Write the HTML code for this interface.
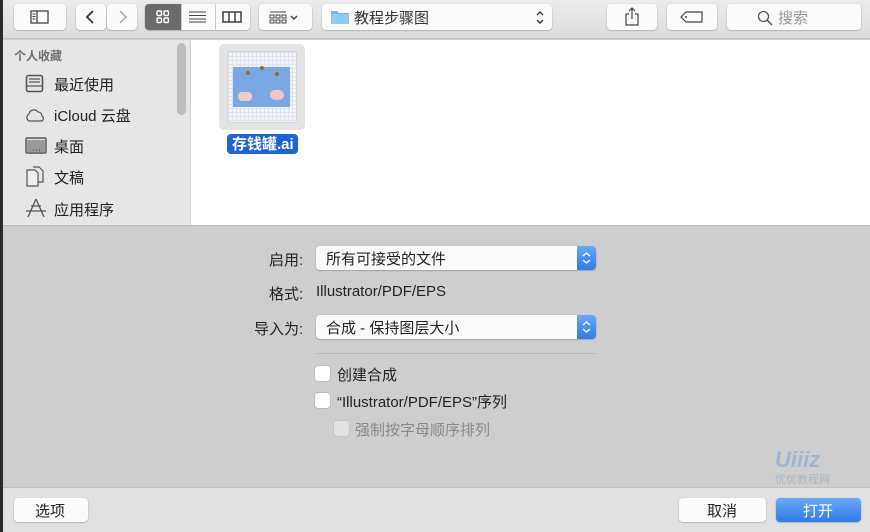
<!DOCTYPE html>
<html><head><meta charset="utf-8"><style>
*{margin:0;padding:0;box-sizing:border-box}
body{width:870px;height:532px;overflow:hidden;position:relative;background:#cecece;font-family:"Liberation Sans","Noto Sans CJK SC",sans-serif;color:#222}
.a{position:absolute}
.btn{position:absolute;background:#fbfbfb;border-radius:4px;box-shadow:0 0.5px 1.5px rgba(0,0,0,.35);}
.t{position:absolute;white-space:nowrap}
.cb{position:absolute;width:15px;height:15px;background:#fff;border-radius:3px;box-shadow:0 0 1px rgba(0,0,0,.5)}
</style></head><body>
<div class="a" style="left:0;top:0;width:870px;height:39px;background:linear-gradient(#ececec,#dcdcdc);border-bottom:1px solid #c4c4c4"></div>
<div class="a" style="left:0;top:0;width:3px;height:532px;background:#2a2a2a;z-index:5"></div>
<div class="btn" style="left:14px;top:4px;width:52px;height:26px"><svg class="a" style="left:16px;top:6px" width="20" height="14"><rect x="1" y="1" width="17" height="12" fill="none" stroke="#444" stroke-width="1.3"/><line x1="7" y1="1" x2="7" y2="13" stroke="#444" stroke-width="1.3"/><path d="M2.5 4h3M2.5 6.5h3M2.5 9h3" stroke="#444"/></svg></div>
<div class="btn" style="left:76px;top:4px;width:30px;height:26px"><svg class="a" style="left:9px;top:6px" width="12" height="14"><path d="M8 1L2 7l6 6" fill="none" stroke="#333" stroke-width="1.8"/></svg></div>
<div class="btn" style="left:107px;top:4px;width:30px;height:26px"><svg class="a" style="left:10px;top:6px" width="12" height="14"><path d="M3 1l6 6-6 6" fill="none" stroke="#aaa" stroke-width="1.5"/></svg></div>
<div class="btn" style="left:145px;top:4px;width:105px;height:26px;overflow:hidden">
<div class="a" style="left:0;top:0;width:36px;height:26px;background:#6b6b6b"></div>
<svg class="a" style="left:11px;top:6px" width="14" height="14"><g fill="none" stroke="#fff" stroke-width="1.4"><rect x="1" y="1" width="4.5" height="4.5" rx="1.2"/><rect x="8" y="1" width="4.5" height="4.5" rx="1.2"/><rect x="1" y="8" width="4.5" height="4.5" rx="1.2"/><rect x="8" y="8" width="4.5" height="4.5" rx="1.2"/></g></svg>
<div class="a" style="left:36px;top:0;width:1px;height:26px;background:#ccc"></div>
<svg class="a" style="left:44px;top:7px" width="18" height="12"><path d="M0 1h17M0 4.5h17M0 8h17M0 11h17" stroke="#444" stroke-width="1.1"/></svg>
<div class="a" style="left:70px;top:0;width:1px;height:26px;background:#ccc"></div>
<svg class="a" style="left:77px;top:7px" width="20" height="12"><rect x="1" y="1" width="18" height="10" fill="none" stroke="#333" stroke-width="1.4"/><path d="M7 1v10M13 1v10" stroke="#333" stroke-width="1.4"/></svg>
</div>
<div class="btn" style="left:259px;top:4px;width:53px;height:26px"><svg class="a" style="left:10px;top:7px" width="34" height="13"><g fill="none" stroke="#444" stroke-width="1"><path d="M1 1h16"/><rect x="1" y="4" width="4" height="3"/><rect x="7" y="4" width="4" height="3"/><rect x="13" y="4" width="4" height="3"/><rect x="1" y="9" width="4" height="3"/><rect x="7" y="9" width="4" height="3"/><rect x="13" y="9" width="4" height="3"/><path d="M22 5l3 3 3-3" stroke-width="1.5"/></g></svg></div>
<div class="btn" style="left:322px;top:4px;width:230px;height:26px">
<svg class="a" style="left:8px;top:5px" width="20" height="16"><path d="M1 2h6l2 2h10v11H1z" fill="#6cb8ee"/><rect x="1" y="5" width="18" height="10" fill="#8ccaf4"/></svg>
<span class="t" style="left:32px;top:3px;font-size:15px;color:#333">教程步骤图</span>
<svg class="a" style="left:213px;top:6px" width="10" height="15"><path d="M2 5l3-3 3 3M2 10l3 3 3-3" fill="none" stroke="#333" stroke-width="1.4"/></svg>
</div>
<div class="btn" style="left:607px;top:4px;width:50px;height:26px"><svg class="a" style="left:17px;top:3px" width="16" height="20"><path d="M8 1v11M5 4l3-3 3 3M5 7H2v11h12V7h-3" fill="none" stroke="#444" stroke-width="1.2"/></svg></div>
<div class="btn" style="left:667px;top:4px;width:50px;height:26px"><svg class="a" style="left:13px;top:7px" width="24" height="12"><path d="M6 1h16v10H6L1 6z" fill="none" stroke="#444" stroke-width="1.2"/><circle cx="6" cy="6" r="1" fill="#444"/></svg></div>
<div class="btn" style="left:727px;top:4px;width:134px;height:26px"><svg class="a" style="left:30px;top:6px" width="16" height="16"><circle cx="6.5" cy="6.5" r="5" fill="none" stroke="#555" stroke-width="1.3"/><path d="M10 10l5 5" stroke="#555" stroke-width="1.5"/></svg><span class="t" style="left:51px;top:3px;font-size:15px;color:#999">搜索</span></div>
<div class="a" style="left:3px;top:40px;width:188px;height:185px;background:#e6e6e6;border-right:1px solid #d0d0d0"></div>
<div class="a" style="left:177px;top:43px;width:9px;height:72px;background:#bdbdbd;border-radius:5px"></div>
<span class="t" style="left:14px;top:47px;font-size:12px;color:#6e6e6e;font-weight:bold">个人收藏</span>
<svg class="a" style="left:25px;top:74px" width="20" height="20"><rect x="1.5" y="1.5" width="16" height="16" rx="2" fill="none" stroke="#555" stroke-width="1.6"/><path d="M4 5h11M4 8h11M1.5 12h16" stroke="#555" stroke-width="1.3"/></svg>
<span class="t" style="left:54px;top:74px;font-size:15px">最近使用</span>
<svg class="a" style="left:24px;top:108px" width="22" height="14"><path d="M5 13a4 4 0 0 1 0-7 5 5 0 0 1 9-2 4 4 0 0 1 4 4 3 3 0 0 1 0 5z" fill="none" stroke="#555" stroke-width="1.2"/></svg>
<span class="t" style="left:54px;top:105px;font-size:15px">iCloud 云盘</span>
<svg class="a" style="left:25px;top:137px" width="22" height="18"><rect x="1" y="1" width="20" height="15" rx="1" fill="#ddd" stroke="#555" stroke-width="1.4"/><rect x="2" y="3" width="18" height="12" fill="#999"/><path d="M8 13h1M11 13h1M14 13h1" stroke="#333"/></svg>
<span class="t" style="left:54px;top:136px;font-size:15px">桌面</span>
<svg class="a" style="left:26px;top:166px" width="20" height="22"><path d="M1 4h8l3 3v13H1z" fill="#eee" stroke="#555" stroke-width="1.2"/><path d="M7 1h6l4 4v11h-5" fill="none" stroke="#555" stroke-width="1.2"/></svg>
<span class="t" style="left:54px;top:167px;font-size:15px">文稿</span>
<svg class="a" style="left:24px;top:198px" width="24" height="20"><path d="M12 1L4 19M12 1l8 18M2 13h20M7 8h10" fill="none" stroke="#555" stroke-width="1.3"/></svg>
<span class="t" style="left:54px;top:199px;font-size:15px">应用程序</span>
<div class="a" style="left:191px;top:40px;width:679px;height:185px;background:#fff"></div>
<div class="a" style="left:219px;top:44px;width:86px;height:86px;background:#e3e3e3;border-radius:5px"></div>
<div class="a" style="left:228px;top:52px;width:68px;height:70px;background:#f2f4f8;background-image:linear-gradient(#dde3ee 1px,transparent 1px),linear-gradient(90deg,#dde3ee 1px,transparent 1px);background-size:4px 4px;box-shadow:0 0 1px #999"></div>
<div class="a" style="left:233px;top:67px;width:57px;height:40px;background:#79a8e4"></div>
<div class="a" style="left:238px;top:92px;width:14px;height:9px;background:#f0cfc2;border-radius:4px"></div>
<div class="a" style="left:270px;top:90px;width:14px;height:10px;background:#f4c4c8;border-radius:5px"></div>
<div class="a" style="left:246px;top:71px;width:4px;height:4px;background:#8a7020;border-radius:2px"></div>
<div class="a" style="left:260px;top:66px;width:4px;height:4px;background:#8a7020;border-radius:2px"></div>
<div class="a" style="left:275px;top:72px;width:4px;height:4px;background:#8a7020;border-radius:2px"></div>
<div class="a" style="left:227px;top:134px;width:71px;height:20px;background:#1e63d4;border-radius:4px"></div>
<span class="t" style="left:232px;top:133px;font-size:15px;color:#fff;font-weight:bold">存钱罐.ai</span>
<div class="a" style="left:3px;top:225px;width:867px;height:1px;background:#bbb"></div>
<span class="t" style="left:269px;top:249px;font-size:15px">启用:</span>
<div class="btn" style="left:316px;top:246px;width:280px;height:24px"><span class="t" style="left:10px;top:2px;font-size:15px">所有可接受的文件</span><div class="a" style="right:0;top:0;width:19px;height:24px;background:linear-gradient(#68a8f8,#2f7be8);border-radius:0 4px 4px 0"></div><svg class="a" style="right:5px;top:5px" width="9" height="14"><path d="M1 5l3.5-3 3.5 3M1 9l3.5 3 3.5-3" fill="none" stroke="#fff" stroke-width="1.4"/></svg></div>
<span class="t" style="left:269px;top:283px;font-size:15px">格式:</span>
<span class="t" style="left:316px;top:283px;font-size:15px">Illustrator/PDF/EPS</span>
<span class="t" style="left:254px;top:318px;font-size:15px">导入为:</span>
<div class="btn" style="left:316px;top:315px;width:280px;height:24px"><span class="t" style="left:10px;top:2px;font-size:15px">合成 - 保持图层大小</span><div class="a" style="right:0;top:0;width:19px;height:24px;background:linear-gradient(#68a8f8,#2f7be8);border-radius:0 4px 4px 0"></div><svg class="a" style="right:5px;top:5px" width="9" height="14"><path d="M1 5l3.5-3 3.5 3M1 9l3.5 3 3.5-3" fill="none" stroke="#fff" stroke-width="1.4"/></svg></div>
<div class="a" style="left:316px;top:353px;width:280px;height:1px;background:#b8b8b8"></div>
<div class="cb" style="left:315px;top:366px"></div><span class="t" style="left:337px;top:364px;font-size:15px">创建合成</span>
<div class="cb" style="left:315px;top:393px"></div><span class="t" style="left:337px;top:391px;font-size:15px">“Illustrator/PDF/EPS”序列</span>
<div class="cb" style="left:334px;top:421px;background:#e2e2e2;box-shadow:0 0 1px rgba(0,0,0,.25)"></div><span class="t" style="left:355px;top:419px;font-size:15px;color:#888">强制按字母顺序排列</span>
<span class="t" style="left:775px;top:447px;font-size:22px;font-weight:bold;font-style:italic;color:#9db6cf">Uiiiz</span>
<span class="t" style="left:775px;top:471px;font-size:11px;color:#a9b4bf">优优教程网</span>
<div class="a" style="left:3px;top:487px;width:867px;height:45px;background:#e1e1e1;border-top:1px solid #c0c0c0"></div>
<div class="btn" style="left:14px;top:498px;width:74px;height:24px"><span class="t" style="left:21px;top:2px;font-size:15px">选项</span></div>
<div class="btn" style="left:679px;top:498px;width:87px;height:24px"><span class="t" style="left:28px;top:2px;font-size:15px">取消</span></div>
<div class="btn" style="left:776px;top:498px;width:85px;height:24px;background:linear-gradient(#6aaaf8,#2f7ae8)"><span class="t" style="left:27px;top:2px;font-size:15px;color:#fff">打开</span></div>
</body></html>
